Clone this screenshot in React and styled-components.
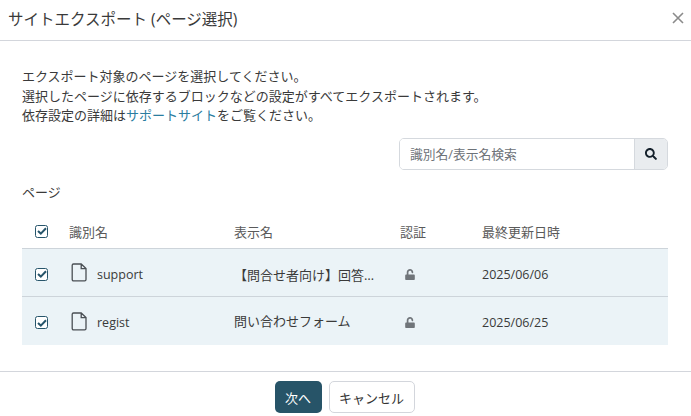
import React from "react";
import styled, { createGlobalStyle } from "styled-components";
import { FaUnlock, FaSearch } from "react-icons/fa";

const Global = createGlobalStyle`
  html, body { margin: 0; padding: 0; background: #fff; }
  body { font-family: "Open Sans", "Noto Sans CJK JP", sans-serif; color: #333; }
  * { box-sizing: border-box; }
`;

const Modal = styled.div`
  width: 691px;
  height: 416px;
  display: flex;
  flex-direction: column;
  overflow: hidden;
`;
const Header = styled.header`
  height: 41px;
  flex: none;
  display: flex;
  align-items: center;
  justify-content: space-between;
  padding: 0 6px 4px 8px;
  border-bottom: 1px solid #d3d6dc;
`;
const Title = styled.h1`
  margin: 0;
  font-size: 15.5px;
  font-weight: 400;
  color: #3a3a3a;
`;
const Close = styled.button`
  border: 0;
  background: none;
  padding: 0;
  width: 14px;
  height: 14px;
  display: flex;
  color: #8b8b8b;
`;
const Body = styled.main`
  flex: 1;
  padding: 26px 23px 0 22px;
  display: flex;
  flex-direction: column;
`;
const Intro = styled.p`
  margin: 0;
  font-size: 13px;
  line-height: 19.5px;
  color: #3a3a3a;
`;
const SupportLink = styled.a`
  color: #2a7d9f;
  text-decoration: none;
`;
const SearchRow = styled.div`
  display: flex;
  justify-content: flex-end;
  margin-top: 12px;
`;
const SearchBox = styled.div`
  width: 269px;
  height: 32px;
  display: flex;
  border: 1px solid #d5d9de;
  border-radius: 5px;
  overflow: hidden;
`;
const SearchInput = styled.input`
  flex: 1;
  min-width: 0;
  border: 0;
  outline: 0;
  padding: 0 10px;
  font: inherit;
  font-size: 12.75px;
  &::placeholder { color: #6d7278; opacity: 1; }
`;
const SearchButton = styled.button`
  width: 33px;
  border: 0;
  border-left: 1px solid #d5d9de;
  background: #e9ecef;
  display: flex;
  align-items: center;
  justify-content: center;
  padding: 0;
  color: #14202b;
  font-size: 12px;
`;
const SectionLabel = styled.div`
  margin-top: 13px;
  font-size: 13px;
  line-height: 19px;
  color: #3a3a3a;
`;
const Table = styled.div`
  margin-top: 14px;
  display: flex;
  flex-direction: column;
`;
const Row = styled.div`
  display: grid;
  grid-template-columns: 47px 165px 166px 82px 1fr;
  align-items: center;
  height: ${p => (p.$head ? "33px" : "48px")};
  background: ${p => (p.$head ? "transparent" : "#ebf3f7")};
  border-bottom: ${p => (p.$last ? "0" : "1px solid #cdd4da")};
  padding: ${p => (p.$head ? "0 0 1px" : "4px 0 0")};
  font-size: 13px;
  color: ${p => (p.$head ? "#5a5a5a" : "#3a3a3a")};
`;
const CheckCell = styled.div`
  padding-left: 13px;
  display: flex;
`;
const Box = styled.span`
  width: 13px;
  height: 13px;
  border: 1.5px solid #27556b;
  border-radius: 2.5px;
  background: #fff;
  display: flex;
  align-items: center;
  justify-content: center;
`;
const NameCell = styled.div`
  display: flex;
  align-items: center;
  gap: 10px;
`;
const FileSvg = styled.svg`
  width: 16px;
  height: 19px;
  margin: -3px 0 0 2px;
  flex: none;
`;
const Name = styled.span`
  font-size: 12.5px;
  line-height: 1;
  margin-top: 2px;
`;
const DisplayName = styled.div`
  white-space: nowrap;
  overflow: hidden;
  text-overflow: ellipsis;
  width: 143px;
  margin-top: ${p => (p.$up ? "-4px" : "0")};
`;
const AuthCell = styled.div`
  padding-left: 5px;
  display: flex;
  color: #70757a;
`;
const LockIcon = styled(FaUnlock)`
  width: 10px;
  height: 11px;
`;
const DateCell = styled.div`
  font-size: 12.5px;
`;
const Footer = styled.footer`
  height: 45px;
  flex: none;
  border-top: 1px solid #d3d6dc;
  display: flex;
  justify-content: center;
  gap: 7px;
  padding: 9px 2px 0 0;
`;
const Primary = styled.button`
  width: 47px;
  height: 32px;
  border: 0;
  border-radius: 5px;
  background: #275468;
  color: #fff;
  font: inherit;
  font-size: 13px;
  padding: 0;
`;
const Secondary = styled.button`
  width: 86px;
  height: 32px;
  border: 1px solid #d3d6dc;
  border-radius: 5px;
  background: #fff;
  color: #333;
  font: inherit;
  font-size: 13px;
  padding: 0;
`;

const Check = () => (
  <Box>
    <svg width="10" height="8" viewBox="0 0 10 8" aria-hidden="true">
      <path d="M1 4l2.8 2.6L9 1.2" fill="none" stroke="#27556b" strokeWidth="2" />
    </svg>
  </Box>
);

const FileIcon = () => (
  <FileSvg viewBox="0 0 16 19" aria-hidden="true">
    <path
      d="M2.5 1H10.2L15 5.6V16.5a1.3 1.3 0 0 1-1.3 1.3H2.5a1.3 1.3 0 0 1-1.3-1.3V2.3A1.3 1.3 0 0 1 2.5 1ZM10.2 1V5.6H15"
      fill="none"
      stroke="#4a4f54"
      strokeWidth="1.3"
    />
  </FileSvg>
);

const rows = [
  { id: "support", name: "【問合せ者向け】回答確認ページ", date: "2025/06/06" },
  { id: "regist", name: "問い合わせフォーム", date: "2025/06/25", up: true, last: true },
];

export default function App() {
  return (
    <Modal>
      <Global />
      <Header>
        <Title>サイトエクスポート (ページ選択)</Title>
        <Close aria-label="閉じる">
          <svg width="14" height="14" viewBox="0 0 14 14">
            <path d="M2 2l10 10M12 2L2 12" stroke="currentColor" strokeWidth="1.6" fill="none" />
          </svg>
        </Close>
      </Header>
      <Body>
        <Intro>
          エクスポート対象のページを選択してください。
          <br />
          選択したページに依存するブロックなどの設定がすべてエクスポートされます。
          <br />
          依存設定の詳細は<SupportLink href="#">サポートサイト</SupportLink>をご覧ください。
        </Intro>
        <SearchRow>
          <SearchBox>
            <SearchInput placeholder="識別名/表示名検索" />
            <SearchButton aria-label="検索">
              <FaSearch />
            </SearchButton>
          </SearchBox>
        </SearchRow>
        <SectionLabel>ページ</SectionLabel>
        <Table>
          <Row $head>
            <CheckCell><Check /></CheckCell>
            <div>識別名</div>
            <div>表示名</div>
            <div>認証</div>
            <div>最終更新日時</div>
          </Row>
          {rows.map(r => (
            <Row key={r.id} $last={r.last}>
              <CheckCell><Check /></CheckCell>
              <NameCell>
                <FileIcon />
                <Name>{r.id}</Name>
              </NameCell>
              <DisplayName $up={r.up}>{r.name}</DisplayName>
              <AuthCell><LockIcon /></AuthCell>
              <DateCell>{r.date}</DateCell>
            </Row>
          ))}
        </Table>
      </Body>
      <Footer>
        <Primary>次へ</Primary>
        <Secondary>キャンセル</Secondary>
      </Footer>
    </Modal>
  );
}
